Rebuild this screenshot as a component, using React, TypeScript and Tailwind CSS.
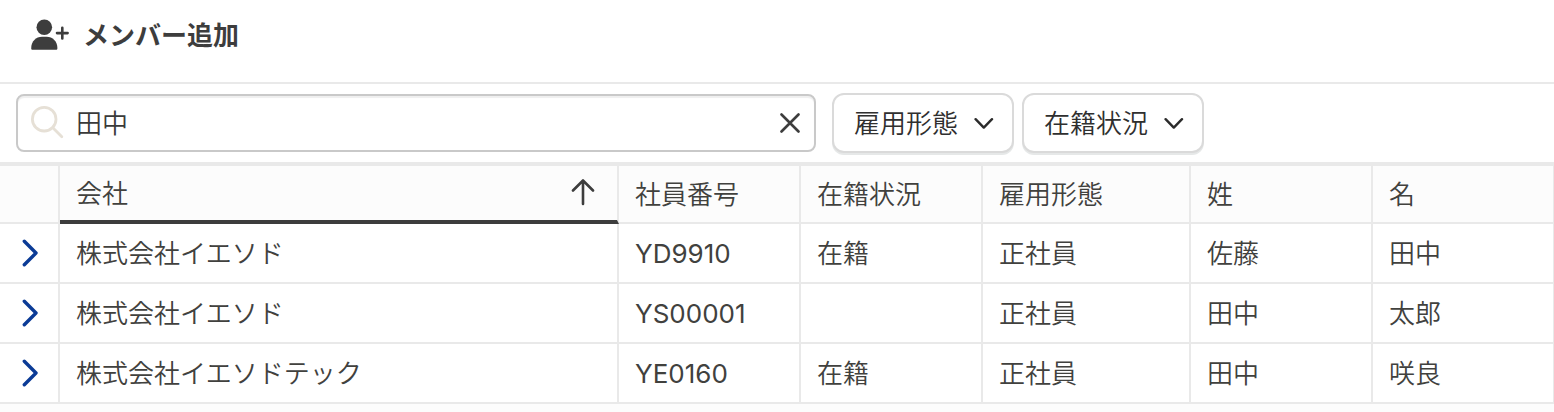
import React, { useState } from 'react';

interface Member {
  id: string;
  company: string;
  code: string;
  status: string;
  employment: string;
  lastName: string;
  firstName: string;
}

const MEMBERS: Member[] = [
  { id: '1', company: '株式会社イエソド', code: 'YD9910', status: '在籍', employment: '正社員', lastName: '佐藤', firstName: '田中' },
  { id: '2', company: '株式会社イエソド', code: 'YS00001', status: '', employment: '正社員', lastName: '田中', firstName: '太郎' },
  { id: '3', company: '株式会社イエソドテック', code: 'YE0160', status: '在籍', employment: '正社員', lastName: '田中', firstName: '咲良' },
];

const UserPlusIcon = () => (
  <svg width="40" height="36" viewBox="0 0 40 36" aria-hidden="true">
    <circle cx="14.3" cy="9.2" r="7.8" fill="#3d3d3d" />
    <path d="M1.200 30.200c0-6.800 4.800-11.400 10.800-11.400h4.600c6 0 10.800 4.600 10.800 11.400 0 1-.5 1.500-1.500 1.500H2.700c-1 0-1.500-.5-1.500-1.500z" fill="#3d3d3d" />
    <path d="M32.300 9.800v10.600M27 15.100h10.600" stroke="#3d3d3d" strokeWidth="2.600" strokeLinecap="round" />
  </svg>
);

const SearchIcon = () => (
  <svg width="34" height="34" viewBox="0 0 34 34" fill="none" stroke="#e6e0d6" strokeWidth="2.8" strokeLinecap="round" aria-hidden="true">
    <circle cx="14.200" cy="13.200" r="11.800" />
    <path d="M22.800 21.800l9 9" />
  </svg>
);

const CloseIcon = () => (
  <svg width="20" height="20" viewBox="0 0 20 20" fill="none" stroke="#3d3d3d" strokeWidth="2.6" strokeLinecap="round" aria-hidden="true">
    <path d="M1.500 1.500l17 17M18.500 1.500l-17 17" />
  </svg>
);

const ChevronDownIcon = () => (
  <svg width="20" height="12" viewBox="0 0 20 12" fill="none" stroke="#2b2b2b" strokeWidth="2.4" strokeLinecap="round" strokeLinejoin="round" aria-hidden="true">
    <path d="M1.600 2.200l8.200 8.400 8.200-8.400" />
  </svg>
);

const ArrowUpIcon = () => (
  <svg width="24" height="28" viewBox="0 0 24 28" fill="none" stroke="#3d3d3d" strokeWidth="2.600" strokeLinecap="round" strokeLinejoin="round" aria-hidden="true">
    <path d="M12 25V1.500M2 11.500l10-10 10 10" />
  </svg>
);

const ChevronRightIcon = () => (
  <svg width="16" height="28" viewBox="0 0 16 28" fill="none" stroke="#0b3b96" strokeWidth="3.400" strokeLinecap="round" strokeLinejoin="round" aria-hidden="true">
    <path d="M2.300 2.200l11.700 11.800L2.300 25.800" />
  </svg>
);

const FilterButton: React.FC<{ label: string }> = ({ label }) => (
  <button
    type="button"
    className="flex h-[60px] items-center gap-4 rounded-xl border-2 border-[#dadada] bg-white pr-[18px] pl-5 text-[#2f2f2f] shadow-[0_2px_0_#e6e8e8]"
  >
    <span className="pt-0.5">{label}</span>
    <ChevronDownIcon />
  </button>
);

const headCell = 'h-[58px] border-r-2 border-b-2 border-[#e9e9e9] px-4 pt-0.5 text-left font-[350] last:border-r';
const bodyCell = 'h-[60px] border-r-2 border-b-2 border-[#e9e9e9] bg-white px-4 pt-0.5 last:border-r';

const App: React.FC = () => {
  const [query, setQuery] = useState('田中');

  return (
    <div className="min-h-screen overflow-hidden bg-[#fcfcfc] font-['Inter','Noto_Sans_CJK_JP',sans-serif] text-[26px] leading-9 font-[350] text-[#41413e]">
      {/* Header */}
      <header className="border-b-2 border-[#e9e9e9] bg-white px-[30px] pt-[18px] pb-7">
        <button type="button" className="flex items-center gap-[13px] font-bold text-[#3d3d3d]">
          <UserPlusIcon />
          <span>メンバー追加</span>
        </button>
      </header>

      {/* Search and filters */}
      <div className="flex h-[78px] items-center bg-white px-4">
        <label className="flex h-[58px] w-[800px] items-center rounded-lg border-2 border-[#c9c9c9] px-3 shadow-[inset_0_2px_1px_#efefef]">
          <SearchIcon />
          <input
            type="text"
            aria-label="検索"
            value={query}
            onChange={(e) => setQuery(e.target.value)}
            className="ml-3 min-w-0 grow bg-transparent pt-0.5 text-[#3a3a3a] outline-none"
          />
          <button type="button" aria-label="クリア" onClick={() => setQuery('')} className="mr-0.5">
            <CloseIcon />
          </button>
        </label>
        <div className="ml-4 flex gap-2">
          <FilterButton label="雇用形態" />
          <FilterButton label="在籍状況" />
        </div>
      </div>

      {/* Members */}
      <table className="w-full table-fixed border-separate border-spacing-0 border-t-4 border-[#e9e9e9]">
        <colgroup>
          <col className="w-[60px]" />
          <col />
          <col className="w-[182px]" />
          <col className="w-[182px]" />
          <col className="w-[208px]" />
          <col className="w-[182px]" />
          <col className="w-[181px]" />
        </colgroup>
        <thead>
          <tr>
            <th className={headCell} aria-label="詳細"></th>
            <th className="h-[58px] border-r-2 border-b-4 border-r-[#e9e9e9] border-b-[#3d3d3d] pr-[22px] pl-4 text-left font-[350]" aria-sort="ascending">
              <button type="button" className="flex w-full items-center justify-between">
                <span className="pt-0.5">会社</span>
                <ArrowUpIcon />
              </button>
            </th>
            <th className={headCell}>社員番号</th>
            <th className={headCell}>在籍状況</th>
            <th className={headCell}>雇用形態</th>
            <th className={headCell}>姓</th>
            <th className={headCell}>名</th>
          </tr>
        </thead>
        <tbody>
          {MEMBERS.map((member) => (
            <tr key={member.id}>
              <td className="h-[60px] border-r-2 border-b-2 border-[#e9e9e9] bg-white pl-[22px]">
                <button type="button" aria-label="開く" className="block">
                  <ChevronRightIcon />
                </button>
              </td>
              <td className={bodyCell}>{member.company}</td>
              <td className={`${bodyCell} font-normal`}>{member.code}</td>
              <td className={bodyCell}>{member.status}</td>
              <td className={bodyCell}>{member.employment}</td>
              <td className={bodyCell}>{member.lastName}</td>
              <td className={bodyCell}>{member.firstName}</td>
            </tr>
          ))}
        </tbody>
      </table>
    </div>
  );
};

export default App;
